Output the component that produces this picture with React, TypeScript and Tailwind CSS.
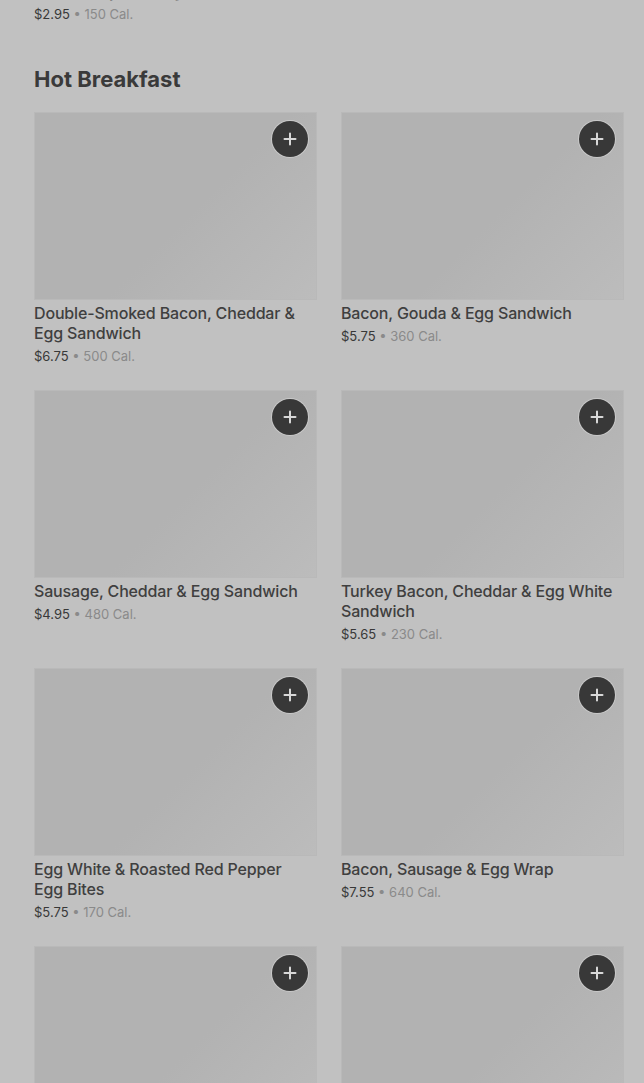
import React from "react";

type Item = { name: string; price: string; cal: string };

const items: Item[] = [
  { name: "Double-Smoked Bacon, Cheddar & Egg Sandwich", price: "$6.75", cal: "500 Cal." },
  { name: "Bacon, Gouda & Egg Sandwich", price: "$5.75", cal: "360 Cal." },
  { name: "Sausage, Cheddar & Egg Sandwich", price: "$4.95", cal: "480 Cal." },
  { name: "Turkey Bacon, Cheddar & Egg White Sandwich", price: "$5.65", cal: "230 Cal." },
  { name: "Egg White & Roasted Red Pepper Egg Bites", price: "$5.75", cal: "170 Cal." },
  { name: "Bacon, Sausage & Egg Wrap", price: "$7.55", cal: "640 Cal." },
  { name: "Bacon & Gruyère Egg Bites", price: "$5.45", cal: "300 Cal." },
  { name: "Impossible™ Breakfast Sandwich", price: "$6.25", cal: "420 Cal." },
];

const Price = ({ price, cal }: { price: string; cal: string }) => (
  <div className="mt-[3px] text-[13px] leading-5">
    <span className="text-[#383838]">{price}</span>
    <span className="text-[#8a8a8a]"> • {cal}</span>
  </div>
);

const AddButton = () => (
  <button className="absolute right-[8px] top-[8px] flex h-9 w-9 items-center justify-center rounded-full bg-[#383838] ring-1 ring-[#c9c9c9]">
    <svg width="14" height="14" viewBox="0 0 14 14" fill="none">
      <path d="M7 1.5v11M1.5 7h11" stroke="#d8d8d8" strokeWidth="2" strokeLinecap="round" />
    </svg>
  </button>
);

const Card = ({ item }: { item: Item }) => (
  <div>
    <div className="relative h-[188px] border border-[#b9b9b9] bg-[linear-gradient(135deg,#b2b2b2_0%,#b2b2b2_55%,#bcbcbc_100%)]">
      <AddButton />
    </div>
    <div className="mt-[3px] pr-2 text-[16px] font-medium leading-5 tracking-[-0.01em] text-[#3f3f3f]">
      {item.name}
    </div>
    <Price price={item.price} cal={item.cal} />
  </div>
);

export default function App() {
  return (
    <div
      className="h-[1083px] overflow-hidden bg-[#c1c1c1] pl-[34px] pr-5"
      style={{ fontFamily: "Inter, 'Noto Sans', sans-serif" }}
    >
      <div className="-mt-[19px]">
        <div className="text-[16px] font-medium leading-5 tracking-[-0.01em] text-[#3f3f3f]">
          Strawberry Overnight Grains
        </div>
        <Price price="$2.95" cal="150 Cal." />
      </div>
      <h2 className="mt-[40px] text-[22px] font-bold leading-[30px] text-[#3a3a3a]">Hot Breakfast</h2>
      <div className="mt-[18px] grid grid-cols-2 gap-x-6 gap-y-6">
        {items.map((item, i) => (
          <Card key={i} item={item} />
        ))}
      </div>
    </div>
  );
}
